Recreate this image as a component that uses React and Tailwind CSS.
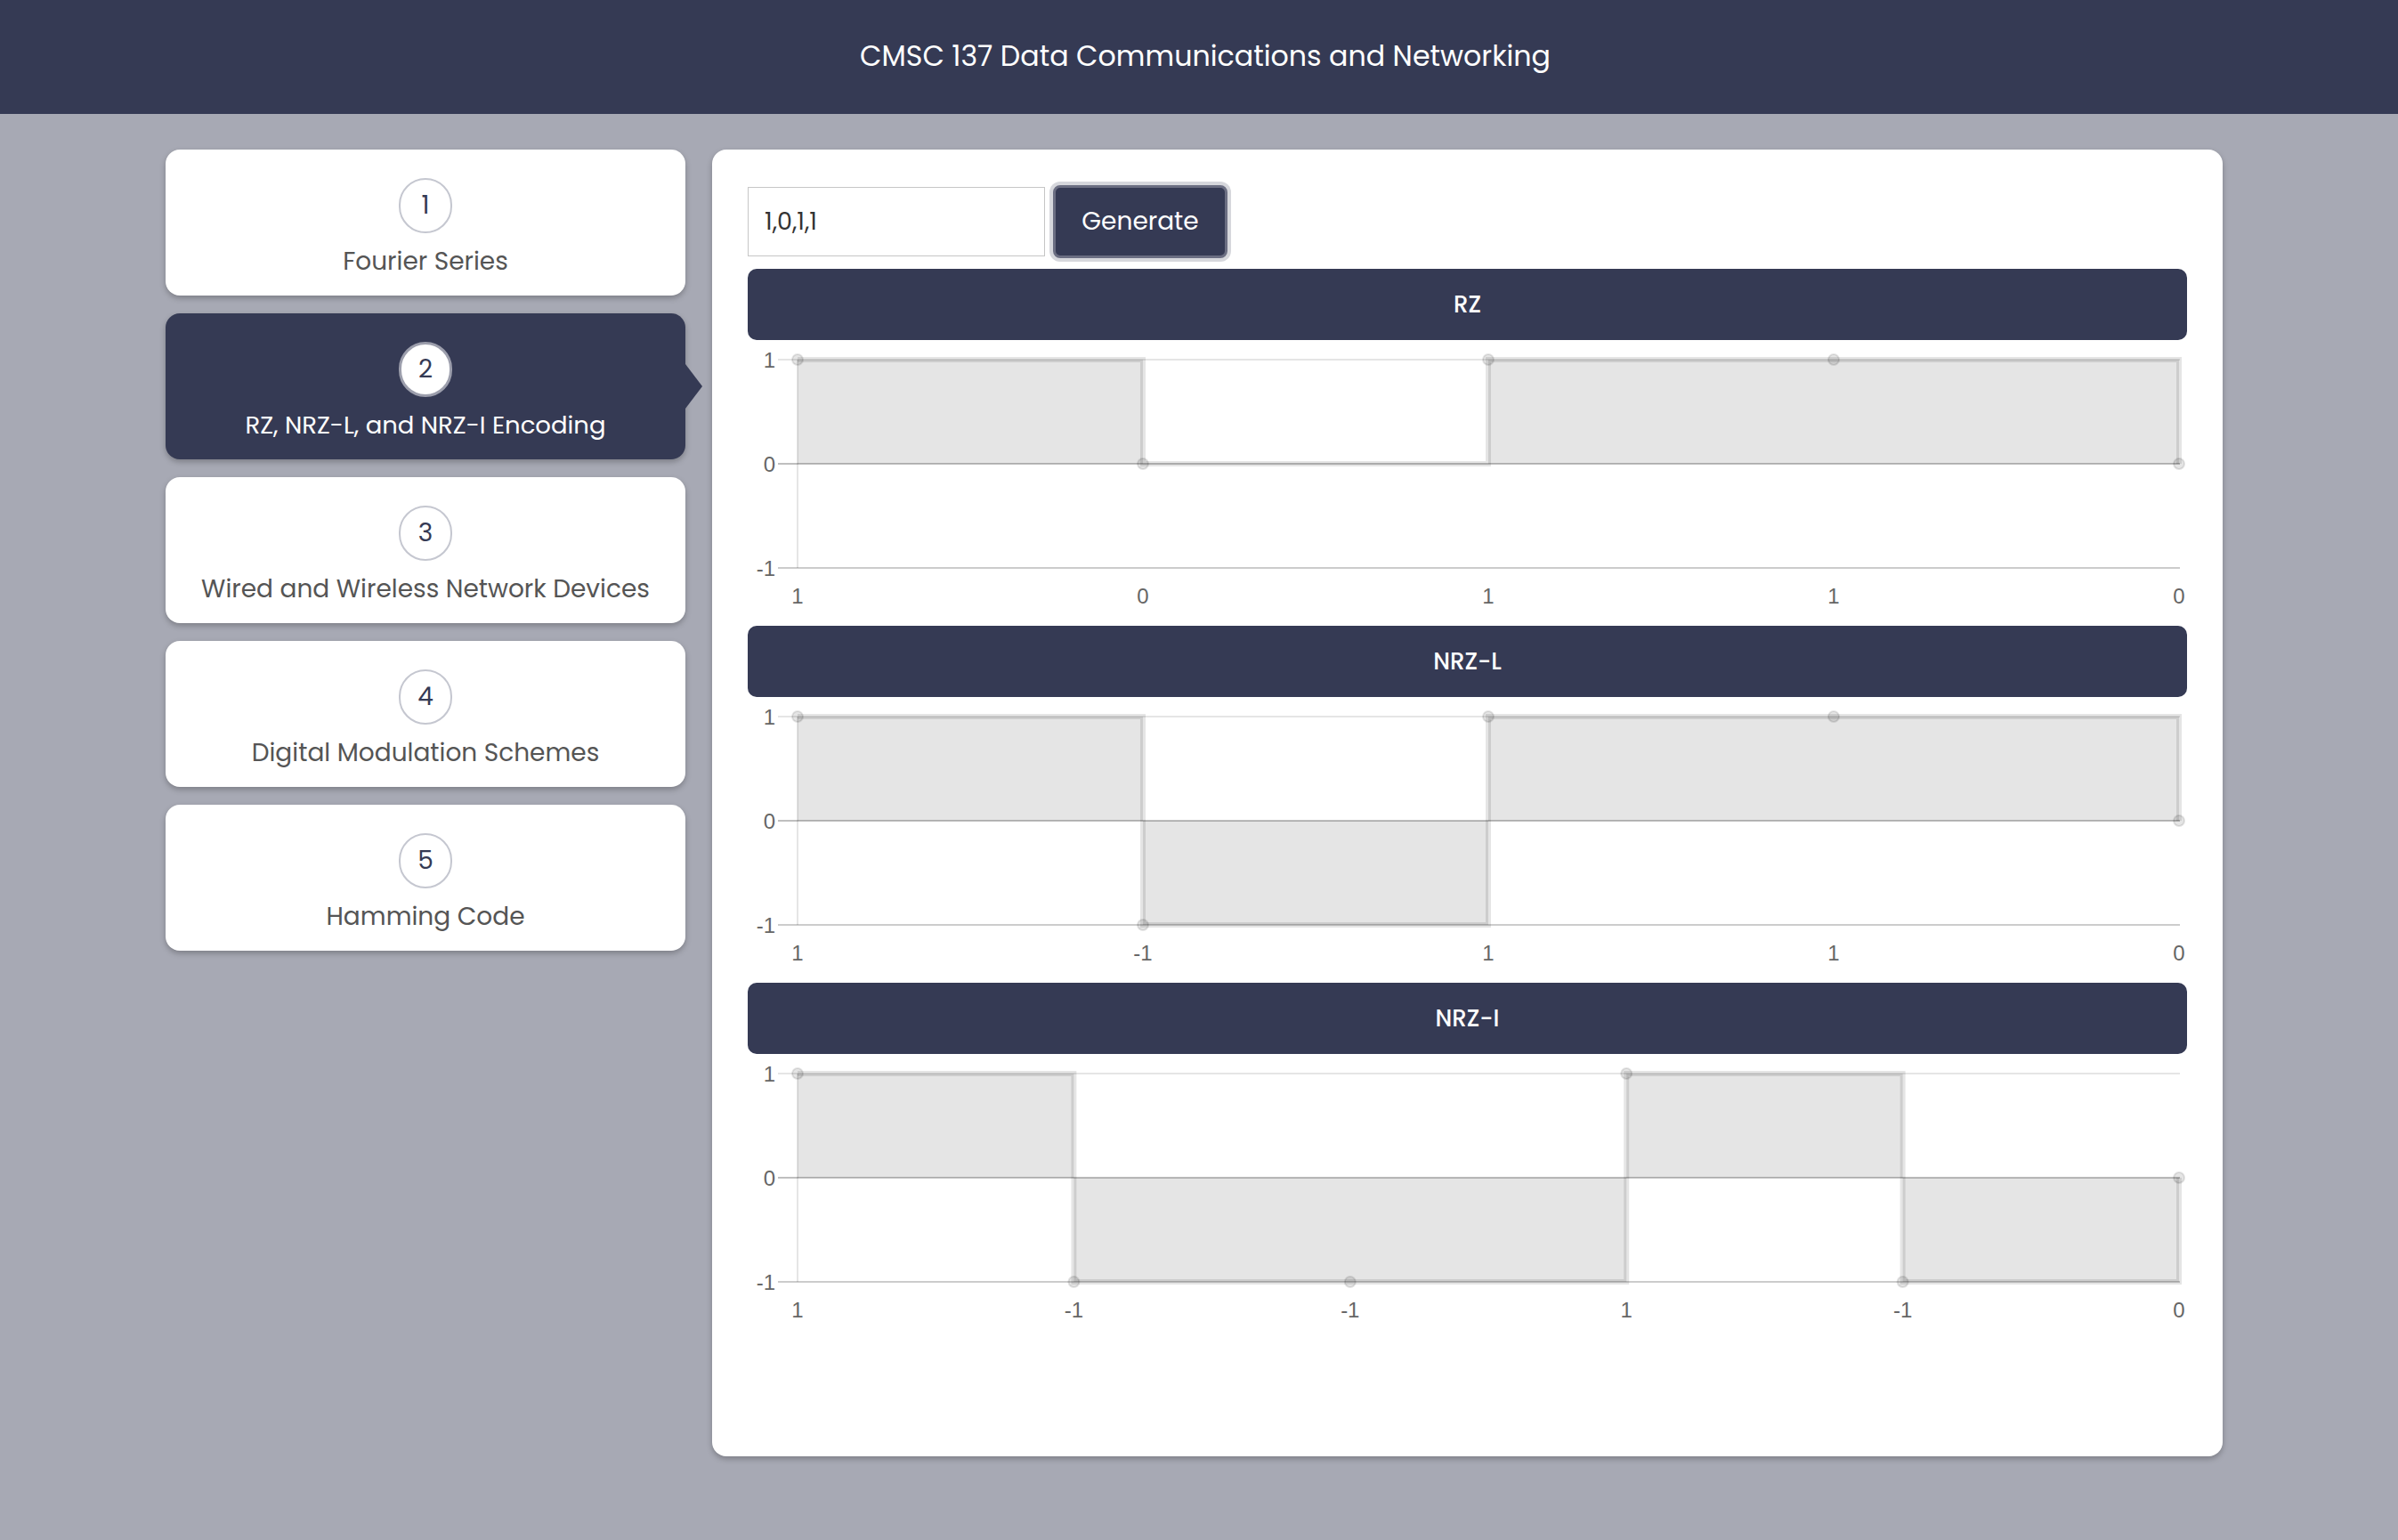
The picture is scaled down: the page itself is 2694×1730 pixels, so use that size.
import React from "react";

const topics = [
  { n: 1, label: "Fourier Series" },
  { n: 2, label: "RZ, NRZ-L, and NRZ-I Encoding", active: true },
  { n: 3, label: "Wired and Wireless Network Devices" },
  { n: 4, label: "Digital Modulation Schemes" },
  { n: 5, label: "Hamming Code" },
];

const charts = [
  { title: "RZ", data: [1, 0, 1, 1, 0] },
  { title: "NRZ-L", data: [1, -1, 1, 1, 0] },
  { title: "NRZ-I", data: [1, -1, -1, 1, -1, 0] },
];

// stepped line chart, drawn like chart.js output
const StepChart = ({ data }) => {
  const W = 1616;
  const H = 321;
  const x0 = 56;
  const x1 = 1608;
  const yOf = (v) => 139 - v * 117;
  const step = (x1 - x0) / (data.length - 1);
  const xs = data.map((_, i) => x0 + i * step);

  let line = `M ${xs[0]} ${yOf(data[0])}`;
  for (let i = 1; i < data.length; i++) {
    line += ` H ${xs[i]} V ${yOf(data[i])}`;
  }
  const fill = `M ${xs[0]} ${yOf(0)} V ${yOf(data[0])}` + line.slice(line.indexOf("H") - 1) + ` V ${yOf(0)} Z`;

  return (
    <svg width={W} height={H} className="block">
      {/* y axis */}
      <line x1={x0} y1={yOf(1)} x2={x0} y2={yOf(-1)} stroke="rgba(0,0,0,0.1)" strokeWidth="2" />
      {/* grid lines */}
      <line x1={34} y1={yOf(1)} x2={x1 + 1} y2={yOf(1)} stroke="rgba(0,0,0,0.1)" strokeWidth="2" />
      <line x1={34} y1={yOf(0)} x2={x1 + 1} y2={yOf(0)} stroke="rgba(0,0,0,0.25)" strokeWidth="2" />
      <line x1={34} y1={yOf(-1)} x2={x1 + 1} y2={yOf(-1)} stroke="rgba(0,0,0,0.2)" strokeWidth="2" />

      <path d={fill} fill="rgba(0,0,0,0.1)" />
      <path d={line} fill="none" stroke="rgba(0,0,0,0.1)" strokeWidth="6" />

      {xs.map((x, i) => (
        <circle key={i} cx={x} cy={yOf(data[i])} r="6" fill="rgba(0,0,0,0.1)" stroke="rgba(0,0,0,0.1)" strokeWidth="2" />
      ))}

      {[1, 0, -1].map((v) => (
        <text
          key={v}
          x={31}
          y={yOf(v) + 9}
          textAnchor="end"
          fontFamily="'Liberation Sans', Arial, sans-serif"
          fontSize="24"
          fill="#666">
          {v}
        </text>
      ))}

      {xs.map((x, i) => (
        <text
          key={i}
          x={x}
          y={296}
          textAnchor="middle"
          fontFamily="'Liberation Sans', Arial, sans-serif"
          fontSize="24"
          fill="#666">
          {data[i]}
        </text>
      ))}
    </svg>
  );
};

const TopicCard = ({ n, label, active }) => (
  <div
    className={`relative h-[164px] rounded-[16px] flex flex-col items-center pt-[32px] shadow-[0_3px_6px_rgba(0,0,0,0.25)] ${
      active ? "bg-[#353a54]" : "bg-white"
    }`}>
    <div
      className={`w-[60px] h-[62px] rounded-full flex items-center justify-center text-[28px] text-[#353a54] ${
        active ? "bg-white border-[3px] border-[#9c9eac]" : "bg-white border-2 border-[#c5c7d0]"
      }`}>
      {n}
    </div>
    <div
      className={`mt-[12px] leading-[40px] ${
        active ? "text-white text-[27.5px]" : "text-[#555555] text-[28px]"
      }`}>
      {label}
    </div>
    {active && (
      <div className="absolute right-[-19px] top-1/2 -translate-y-1/2 w-0 h-0 border-y-[25px] border-y-transparent border-l-[19px] border-l-[#353a54]"></div>
    )}
  </div>
);

export default function App() {
  return (
    <div className="min-h-[1730px] bg-[#a7a9b4] font-['Poppins','Open_Sans',sans-serif]">
      {/* top bar */}
      <div className="h-[128px] bg-[#353a54] flex items-center justify-center pl-[14px]">
        <h1 className="text-white text-[31.7px]">CMSC 137 Data Communications and Networking</h1>
      </div>

      <div className="flex items-start gap-[30px] pl-[186px] pt-[40px]">
        {/* sidebar */}
        <div className="w-[584px] flex flex-col gap-[20px]">
          {topics.map((t) => (
            <TopicCard key={t.n} {...t} />
          ))}
        </div>

        {/* main panel */}
        <div className="w-[1697px] h-[1468px] bg-white rounded-[16px] shadow-[0_3px_6px_rgba(0,0,0,0.25)] px-[40px] pt-[40px]">
          <div className="flex items-center">
            <input
              defaultValue="1,0,1,1"
              className="w-[334px] h-[78px] border border-[#c6c6c6] pl-[18px] text-[27px] text-[#333] outline-none"
            />
            <button className="ml-[9px] w-[196px] h-[82px] rounded-[8px] bg-[#353a54] border-[3px] border-[#6b6e82] shadow-[0_0_0_4px_#d6d7dc] text-white text-[28px]">
              Generate
            </button>
          </div>

          <div className="mt-[12px]">
            {charts.map((c) => (
              <div key={c.title}>
                <div className="h-[80px] rounded-[10px] bg-[#353a54] flex items-center justify-center text-white text-[26px] font-medium">
                  {c.title}
                </div>
                <StepChart data={c.data} />
              </div>
            ))}
          </div>
        </div>
      </div>
    </div>
  );
}
